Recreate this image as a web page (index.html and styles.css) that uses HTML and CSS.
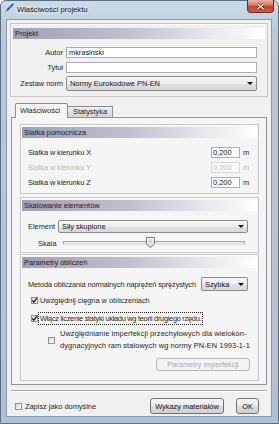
FILE: index.html
```html
<!DOCTYPE html>
<html>
<head>
  <meta charset="utf-8">
  <title>Właściwości projektu</title>
  <link rel="stylesheet" href="styles.css">
</head>
<body>
<div class="window">
  <div class="titlebar">
    <svg class="appicon" width="9" height="10" viewBox="0 0 9 10">
      <path d="M1 9 L3 5 L8 0.5 L8.5 1.5 L4 6.5 Z" fill="#3d6fb6" stroke="#1e3f78" stroke-width="0.6"/>
      <path d="M0.5 9.5 L2 8 L3.5 8.6 Z" fill="#e8eef8"/>
      <path d="M2 5 L4 3 L5 4 Z" fill="#9cc0ea"/>
    </svg>
    <span class="title">Właściwości projektu</span>
    <div class="closebtn">
      <svg width="9" height="7" viewBox="0 0 9 7">
        <path d="M1.5 1 L7.5 6 M7.5 1 L1.5 6" stroke="#5a1a10" stroke-width="2.6"/>
        <path d="M1.5 1 L7.5 6 M7.5 1 L1.5 6" stroke="#ffffff" stroke-width="1.4"/>
      </svg>
    </div>
  </div>

  <div class="client">
    <!-- projekt -->
    <div class="group project">
      <div class="grouphead">Projekt</div>
      <div class="formrow">
        <label>Autor</label>
        <input class="textbox" type="text" value="mkrasinski">
      </div>
      <div class="formrow">
        <label>Tytuł</label>
        <input class="textbox" type="text" value="">
      </div>
      <div class="formrow">
        <label>Zestaw norm</label>
        <div class="combo combo-big"><span>Normy Eurokodowe PN-EN</span><span class="arrow"></span></div>
      </div>
    </div>

    <!-- tabs -->
    <div class="tabstrip">
      <div class="tab active">Właściwości</div>
      <div class="tab">Statystyka</div>
    </div>

    <div class="tabpanel">
      <div class="group grid">
        <div class="grouphead">Siatka pomocnicza</div>
        <div class="gridrow">
          <span class="rowlabel">Siatka w kierunku X</span>
          <input class="numbox" type="text" value="0,200">
          <span class="unit">m</span>
        </div>
        <div class="gridrow disabled">
          <span class="rowlabel">Siatka w kierunku Y</span>
          <input class="numbox" type="text" value="0,000" disabled>
          <span class="unit">m</span>
        </div>
        <div class="gridrow">
          <span class="rowlabel">Siatka w kierunku Z</span>
          <input class="numbox" type="text" value="0,200">
          <span class="unit">m</span>
        </div>
      </div>

      <div class="group scaling">
        <div class="grouphead">Skalowanie elementów</div>
        <div class="elemrow">
          <span class="elemlabel">Element</span>
          <div class="combo combo-elem"><span>Siły skupione</span><span class="arrow"></span></div>
        </div>
        <div class="scalerow">
          <span class="scalelabel">Skala</span>
          <div class="slider">
            <div class="track"></div>
            <svg class="thumb" width="9" height="11" viewBox="0 0 9 11">
              <defs>
                <linearGradient id="tg" x1="0" y1="0" x2="0" y2="1">
                  <stop offset="0" stop-color="#fbfbfb"/>
                  <stop offset="1" stop-color="#d6d6d6"/>
                </linearGradient>
              </defs>
              <path d="M0.5 0.5 H8.5 V7 L4.5 10.5 L0.5 7 Z" fill="url(#tg)" stroke="#7c7c7c"/>
              <path d="M2.5 3 H6.5 M2.5 5 H6.5" stroke="#b9b9b9" stroke-width="0.8"/>
            </svg>
          </div>
        </div>
      </div>

      <div class="group params">
        <div class="grouphead">Parametry obliczeń</div>
        <div class="methodrow">
          <span class="methodtext">Metoda obliczania normalnych naprężeń sprężystych</span>
          <div class="combo combo-method"><span>Szybka</span><span class="arrow"></span></div>
        </div>
        <div class="checkrow first">
          <span class="checkbox checked"><svg width="7" height="7" viewBox="0 0 7 7"><path d="M1.2 3.4 L2.8 5.2 L5.9 1.2" fill="none" stroke="#1c1c1c" stroke-width="1.3"/></svg></span>
          <span class="checktext">Uwzględnij cięgna w obliczeniach</span>
        </div>
        <div class="checkrow second">
          <span class="checkbox checked"><svg width="7" height="7" viewBox="0 0 7 7"><path d="M1.2 3.4 L2.8 5.2 L5.9 1.2" fill="none" stroke="#1c1c1c" stroke-width="1.3"/></svg></span>
          <span class="checktext focused">Włącz liczenie statyki układu wg teorii drugiego rzędu.</span>
        </div>
        <div class="checkrow third">
          <span class="checkbox"></span>
          <span class="checktext">Uwzględnianie imperfekcji przechyłowych dla wielokon-<br>dygnacyjnych ram stalowych wg normy PN-EN 1993-1-1</span>
        </div>
        <div class="buttonrow">
          <div class="button disabled imperf">Parametry imperfekcji</div>
        </div>
      </div>
    </div>

    <div class="separator"></div>

    <div class="footer">
      <span class="checkbox"></span>
      <span class="footertext">Zapisz jako domyślne</span>
      <div class="button materials">Wykazy materiałów</div>
      <div class="button ok">OK</div>
    </div>
  </div>
</div>
</body>
</html>
```

FILE: styles.css
```css
body {
  margin: 0;
  width: 279px;
  height: 424px;
  overflow: hidden;
  background: #ffffff;
  font-family: "Liberation Sans", Arial, sans-serif;
  font-size: 7.4px;
  color: #1e1e1e;
}

.window {
  box-sizing: border-box;
  width: 279px;
  height: 424px;
  border: 1px solid #5b6d80;
  border-radius: 6px 6px 0 0;
  background: linear-gradient(#cddbe8, #b8cad9 30px, #afc1d2);
  display: flex;
  flex-direction: column;
}

/* title bar */
.titlebar {
  height: 18px;
  flex: none;
  display: flex;
  align-items: flex-start;
  padding-left: 4px;
}

.appicon {
  margin-top: 2px;
}

.title {
  margin-left: 3px;
  margin-top: 4px;
  line-height: 9px;
  font-size: 7.6px;
  color: #111;
  text-shadow: 0 0 4px #fff, 0 0 6px #fff;
}

.closebtn {
  box-sizing: border-box;
  margin-left: auto;
  margin-right: 4px;
  width: 27px;
  height: 13px;
  margin-top: -1px;
  border: 1px solid #6e2a20;
  border-top: none;
  border-radius: 0 0 4px 4px;
  background: linear-gradient(#eab1a3, #d7826e 40%, #c2432b 55%, #d65a3f);
  display: flex;
  align-items: center;
  justify-content: center;
}

/* client area */
.client {
  flex: 1;
  margin: 0 6px 6px 5px;
  border: 1px solid #8799ad;
  background: #f0f0f0;
  display: flex;
  flex-direction: column;
}

.group {
  box-sizing: border-box;
  border: 1px solid #c8c8c8;
  box-shadow: inset 1px 1px 0 #fbfbfb;
  display: flex;
  flex-direction: column;
}

.grouphead {
  height: 11px;
  flex: none;
  line-height: 11px;
  padding-left: 2px;
  color: #1a1a2a;
  background: linear-gradient(to right, #a0a0b4, #c0c0cd 45%, #e9e9ee 80%, #ffffff);
}

/* projekt */
.project {
  margin: 3px 3px 0;
  height: 74px;
  padding: 4px 2px 0 2px;
}

.formrow {
  display: flex;
  align-items: center;
  padding-right: 8px;
  margin-top: 4px;
}

.formrow:nth-child(2) {
  margin-top: 8px;
}

.formrow:nth-child(4) {
  margin-top: 3px;
}

.formrow label {
  width: 50px;
  flex: none;
  text-align: right;
  margin-right: 3px;
}

.textbox {
  flex: 1;
  box-sizing: border-box;
  height: 11px;
  margin: 0;
  padding: 0 2px;
  border: 1px solid #abadb3;
  background: #fff;
  font: inherit;
  color: #111;
  outline: none;
}

.combo {
  box-sizing: border-box;
  display: flex;
  align-items: center;
  padding-left: 3px;
  border: 1px solid #8a8a8a;
  border-radius: 2px;
  background: linear-gradient(#f7f7f7, #ececec 50%, #e0e0e0 51%, #d8d8d8);
  color: #111;
}

.combo-big {
  flex: 1;
  height: 15px;
}

.arrow {
  margin-left: auto;
  margin-right: 3px;
  width: 0;
  height: 0;
  border-left: 3px solid transparent;
  border-right: 3px solid transparent;
  border-top: 3px solid #111;
}

/* tabs */
.tabstrip {
  height: 14px;
  flex: none;
  margin-top: 6px;
  margin-left: 8px;
  display: flex;
  align-items: flex-end;
}

.tab {
  box-sizing: border-box;
  border: 1px solid #898c95;
  border-bottom: none;
  padding-left: 4px;
}

.tab.active {
  position: relative;
  z-index: 1;
  width: 53px;
  height: 15px;
  margin-bottom: -1px;
  line-height: 13px;
  background: #f5f5f5;
  border-radius: 2px 2px 0 0;
}

.tab:not(.active) {
  width: 46px;
  height: 11px;
  margin-left: -1px;
  line-height: 10px;
  background: linear-gradient(#f0f0f0, #e0e0e0 50%, #d3d3d3);
  padding-left: 5px;
}

.tabpanel {
  box-sizing: border-box;
  height: 268px;
  flex: none;
  margin: 0 4px;
  border: 1px solid #8e9198;
  background: #f5f5f5;
  display: flex;
  flex-direction: column;
}

.tabpanel .group {
  margin-left: 8px;
  margin-right: 7px;
  padding: 2px 1px 0;
}

/* siatka */
.grid {
  margin-top: 6px;
  height: 70px;
}

.gridrow {
  display: flex;
  align-items: center;
  height: 11px;
  padding: 0 6px;
  margin-top: 4px;
}

.gridrow:nth-child(2) {
  margin-top: 9px;
}

.rowlabel {
  flex: 1;
  letter-spacing: -0.1px;
}

.numbox {
  box-sizing: border-box;
  width: 29px;
  height: 11px;
  margin: 0;
  padding: 0 1px;
  border: 1px solid #abadb3;
  background: #fff;
  font: inherit;
  color: #111;
  outline: none;
}

.unit {
  width: 8px;
  margin-left: 3px;
}

.gridrow.disabled {
  color: #b8b8b8;
}

.gridrow.disabled .numbox {
  color: #c2c2c2;
  border-color: #d6d6d6;
  background: #fafafa;
}

/* skalowanie */
.scaling {
  margin-top: 3px;
  height: 56px;
}

.elemrow {
  display: flex;
  align-items: center;
  margin-top: 9px;
  padding: 0 9px 0 6px;
}

.elemlabel {
  width: 30px;
}

.combo-elem {
  flex: 1;
  height: 13px;
}

.scalerow {
  display: flex;
  align-items: center;
  height: 12px;
  margin-top: 4px;
  padding: 0 12px 0 6px;
}

.scalelabel {
  width: 25px;
  padding-left: 10px;
}

.slider {
  position: relative;
  flex: 1;
  height: 12px;
}

.track {
  margin-top: 4px;
  height: 2px;
  border: 1px solid #a9a9a9;
  border-bottom-color: #e2e2e2;
  background: #e4e4e4;
}

.thumb {
  position: absolute;
  left: 83px;
  top: 0;
}

/* parametry */
.params {
  margin-top: 1px;
  height: 127px;
}

.methodrow {
  display: flex;
  align-items: center;
  margin-top: 9px;
  padding: 0 9px 0 6px;
}

.methodtext {
  white-space: nowrap;
  letter-spacing: -0.12px;
}

.combo-method {
  flex: none;
  margin-left: auto;
  width: 47px;
  height: 14px;
}

.checkrow {
  display: flex;
  align-items: center;
}

.checkbox {
  box-sizing: border-box;
  width: 7px;
  height: 7px;
  flex: none;
  border: 1px solid #8e8f8f;
  background: linear-gradient(135deg, #d8d8d8, #fdfdfd);
  display: flex;
  align-items: center;
  justify-content: center;
}

.checkbox svg {
  flex: none;
}

.checkrow.first {
  height: 11px;
  margin-top: 4px;
  padding-left: 9px;
}

.checkrow.first .checktext {
  margin-left: 2px;
}

.checkrow.second {
  height: 13px;
  margin-top: 6px;
  padding-left: 9px;
}

.checktext.focused {
  margin-left: 1px;
  padding: 0 1px;
  line-height: 11px;
  white-space: nowrap;
  letter-spacing: -0.28px;
  outline: 1px dotted #222;
}

.checkrow.third {
  height: 24px;
  margin-top: 3px;
  padding-left: 26px;
}

.checkrow.third .checktext {
  margin-left: 5px;
  line-height: 12px;
  white-space: nowrap;
  letter-spacing: 0.1px;
}

.buttonrow {
  display: flex;
  justify-content: flex-end;
  margin-top: 6px;
  padding-right: 7px;
}

.button {
  box-sizing: border-box;
  height: 16px;
  display: flex;
  align-items: center;
  justify-content: center;
  border: 1px solid #707070;
  border-radius: 3px;
  background: linear-gradient(#f4f4f4, #ebebeb 50%, #dddddd 51%, #d0d0d0);
  color: #111;
}

.button.imperf {
  width: 94px;
  height: 13px;
}

.button.disabled {
  border-color: #b5b8bb;
  background: #f3f3f3;
  color: #a8a8a8;
}

/* footer */
.separator {
  margin: 5px 4px 0;
  border-top: 1px solid #a6a6a6;
  border-bottom: 1px solid #ffffff;
}

.footer {
  display: flex;
  align-items: center;
  padding: 6px 12px 0 8px;
}

.footertext {
  margin-left: 3px;
}

.button.materials {
  margin-left: auto;
  width: 74px;
}

.button.ok {
  margin-left: 12px;
  width: 23px;
}
```
